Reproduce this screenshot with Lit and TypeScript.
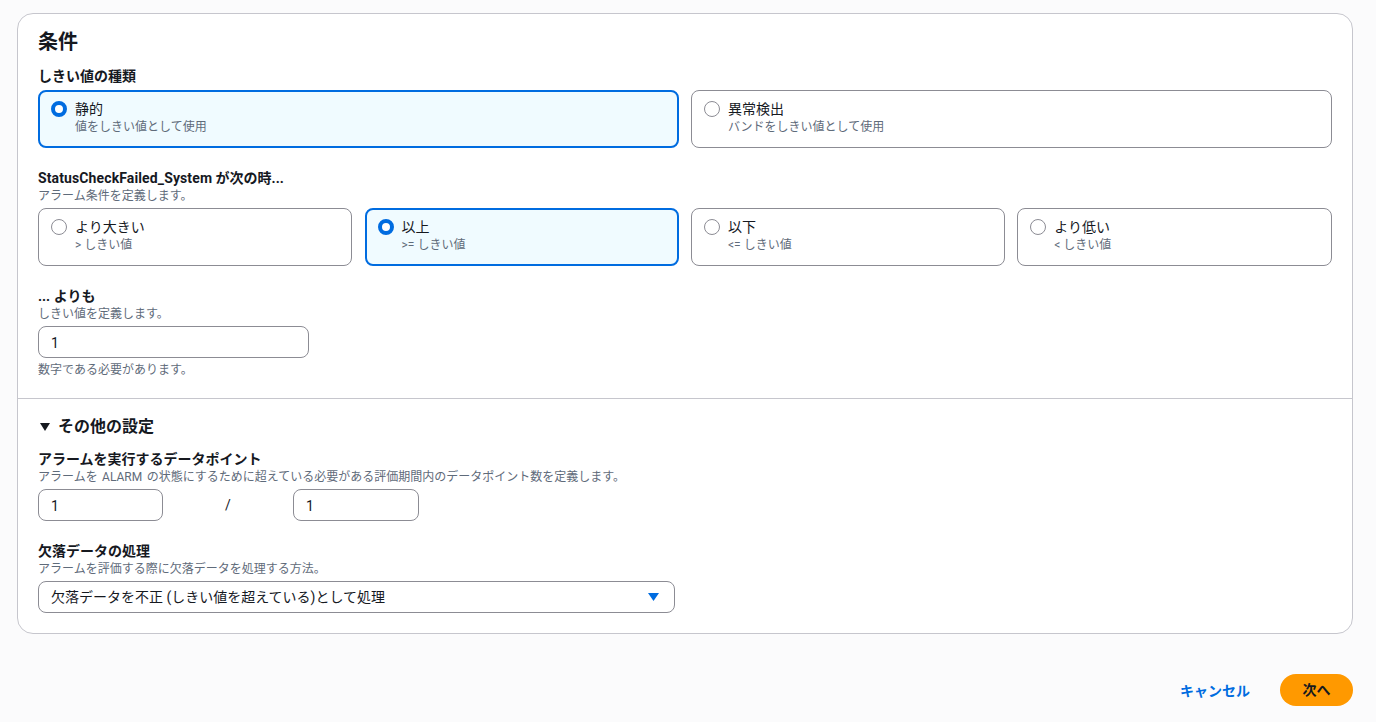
import { LitElement, html, css } from "lit";
import { customElement } from "lit/decorators.js";

type Opt = { t: string; d: string; on?: boolean };

@customElement("app-root")
export class AppRoot extends LitElement {
  static styles = css`
    :host {
      display: block;
      width: 1376px;
      height: 722px;
      box-sizing: border-box;
      overflow: hidden;
      background: #fbfbfc;
      color: #16191f;
      font-family: Roboto, "Noto Sans CJK JP", sans-serif;
      font-size: 14px;
      padding: 13px 23px 0 17px;
    }
    * { box-sizing: border-box; }
    .card {
      background: #fff;
      border: 1px solid #c6c6cd;
      border-radius: 16px;
      height: 621px;
    }
    .top { padding: 15px 20px 0; height: 384px; }
    h2 { margin: 0; font-size: 20px; line-height: 26px; font-weight: 700; height: 26px; }
    .label { font-weight: 700; font-size: 14px; line-height: 18px; height: 18px; }
    .latin { letter-spacing: 0.12px; }
    .desc, .hint { font-size: 12px; line-height: 16px; height: 16px; color: #5f6b7a; padding-top: 1px; }
    .spaced { word-spacing: 1.5px; }
    .f1 { margin-top: 12px; }
    .row { display: grid; gap: 12px; margin-top: 5px; }
    .two { grid-template-columns: 641px 641px; }
    .four { grid-template-columns: 314.3px 314.1px 314px 315px; gap: 12.3px; }
    .opt {
      display: flex;
      gap: 8px;
      height: 58px;
      padding: 10px 12px;
      border: 1px solid #8c8c94;
      border-radius: 8px;
      background: #fff;
    }
    .opt.on {
      border: 2px solid #006ce0;
      background: #f0fbff;
      padding: 9px 11px;
    }
    .radio {
      width: 16px;
      height: 16px;
      flex: none;
      border: 1px solid #8c8c94;
      border-radius: 50%;
      background: #fff;
    }
    .on .radio { border: 4.5px solid #006ce0; }
    .opt .t { font-size: 14px; line-height: 18px; margin-top: -1px; }
    .opt .d { font-size: 12px; line-height: 16px; color: #5f6b7a; margin-top: 1px; }
    .input {
      height: 32px;
      border: 1px solid #8c8c94;
      border-radius: 8px;
      padding: 1px 12px 0;
      display: flex;
      align-items: center;
      font-size: 14px;
      background: #fff;
    }
    .f2, .f3 { margin-top: 21px; }
    .m5 { margin-top: 5px; }
    .w271 { width: 271px; }
    .hint { margin-top: 3px; }
    .bottom { border-top: 1px solid #c6c6cd; padding: 18px 20px 0; }
    .more { display: flex; align-items: center; gap: 8px; font-size: 16px; font-weight: 700; line-height: 20px; height: 20px; padding-left: 2px; }
    .more svg { display: block; }
    .f4 { margin-top: 13px; }
    .points { display: flex; align-items: center; margin-top: 5px; }
    .w125 { width: 125px; }
    .w126 { width: 126px; }
    .slash { width: 130px; text-align: center; font-size: 14px; }
    .select { width: 637px; justify-content: space-between; padding: 0 12px 2px; }
    .select svg { display: block; margin: 2px 3px 0 0; }
    .f5 { margin-top: 21px; }
    .footer {
      display: flex;
      justify-content: flex-end;
      align-items: center;
      gap: 30px;
      margin-top: 40px;
    }
    .cancel { color: #006ce0; font-weight: 700; font-size: 14px; padding-bottom: 1px; }
    .next {
      width: 73px;
      height: 32px;
      border-radius: 16px;
      background: #ff9900;
      color: #16191f;
      font-weight: 700;
      font-size: 14px;
      padding-bottom: 2px;
      display: flex;
      align-items: center;
      justify-content: center;
    }
  `;

  private opt(o: Opt) {
    return html`<div class="opt ${o.on ? "on" : ""}">
      <div class="radio"></div>
      <div><div class="t">${o.t}</div><div class="d">${o.d}</div></div>
    </div>`;
  }

  render() {
    const kinds: Opt[] = [
      { t: "静的", d: "値をしきい値として使用", on: true },
      { t: "異常検出", d: "バンドをしきい値として使用" },
    ];
    const conds: Opt[] = [
      { t: "より大きい", d: "> しきい値" },
      { t: "以上", d: ">= しきい値", on: true },
      { t: "以下", d: "<= しきい値" },
      { t: "より低い", d: "< しきい値" },
    ];
    return html`
      <div class="card">
        <div class="top">
          <h2>条件</h2>
          <div class="label f1">しきい値の種類</div>
          <div class="row two">${kinds.map((o) => this.opt(o))}</div>
          <div class="label f2"><span class="latin">StatusCheckFailed_System</span> が次の時...</div>
          <div class="desc">アラーム条件を定義します。</div>
          <div class="row four">${conds.map((o) => this.opt(o))}</div>
          <div class="label f3">... よりも</div>
          <div class="desc">しきい値を定義します。</div>
          <div class="input w271 m5">1</div>
          <div class="hint">数字である必要があります。</div>
        </div>
        <div class="bottom">
          <div class="more">
            <svg width="10" height="8" viewBox="0 0 10 8"><path d="M0 0h10L5 8z" fill="#16191f"/></svg>
            <span>その他の設定</span>
          </div>
          <div class="label f4">アラームを実行するデータポイント</div>
          <div class="desc spaced">アラームを ALARM の状態にするために超えている必要がある評価期間内のデータポイント数を定義します。</div>
          <div class="points">
            <div class="input w125">1</div>
            <div class="slash">/</div>
            <div class="input w126">1</div>
          </div>
          <div class="label f5">欠落データの処理</div>
          <div class="desc">アラームを評価する際に欠落データを処理する方法。</div>
          <div class="input select m5">
            <span>欠落データを不正 (しきい値を超えている)として処理</span>
            <svg width="11" height="8" viewBox="0 0 11 8"><path d="M0 0h11L5.5 8z" fill="#006ce0"/></svg>
          </div>
        </div>
      </div>
      <div class="footer">
        <div class="cancel">キャンセル</div>
        <div class="next">次へ</div>
      </div>
    `;
  }
}
